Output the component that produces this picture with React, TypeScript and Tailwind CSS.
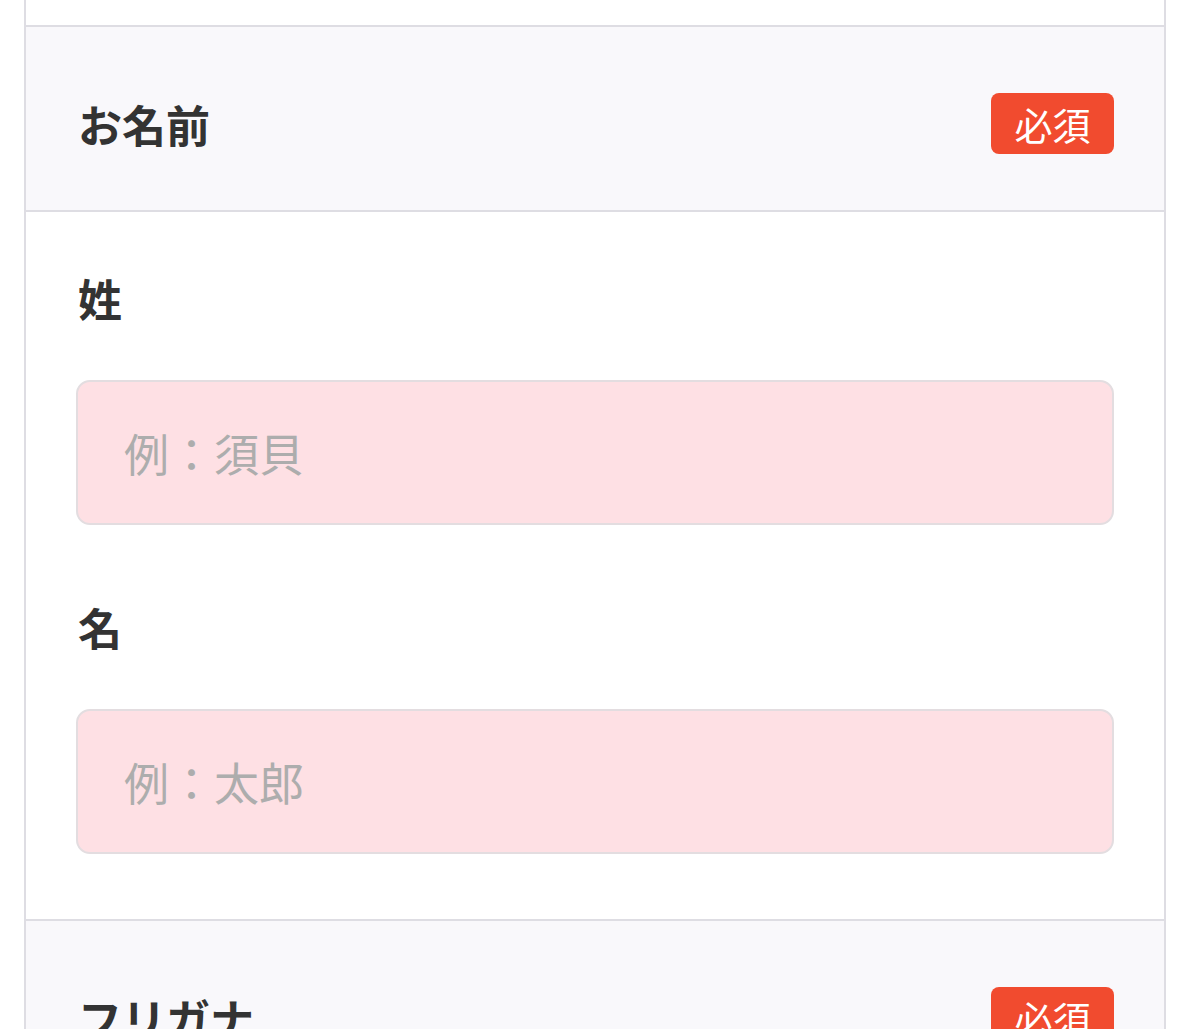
const font = { fontFamily: '"Noto Sans CJK JP", "Noto Sans", sans-serif' };

function SectionHeader({ title }: { title: string }) {
  return (
    <div className="flex h-[187px] items-center justify-between border-y-2 border-[#dedde3] bg-[#f9f8fb] pl-[52px] pr-[50px] pt-[10px]">
      <h2 className="text-[44px] font-bold leading-none text-[#333333]">{title}</h2>
      <span className="flex h-[61px] w-[123px] items-center justify-center rounded-[8px] bg-[#f14b2f] text-[38px] leading-none text-white">
        必須
      </span>
    </div>
  );
}

function Field({ label, placeholder }: { label: string; placeholder: string }) {
  return (
    <div className="flex flex-col">
      <label className="pl-[2px] text-[44px] font-bold leading-none text-[#333333]">{label}</label>
      <input
        className="mt-[60px] h-[145px] w-full rounded-[14px] border-2 border-[#e3dde0] bg-[#fee0e4] px-[46px] text-[45px] text-[#333333] outline-none placeholder:text-[#adadad]"
        placeholder={placeholder}
        style={font}
      />
    </div>
  );
}

export default function App() {
  return (
    <div className="min-h-screen bg-white" style={font}>
      <div className="ml-[24px] w-[1142px] border-x-2 border-[#dedde3]">
        <div className="h-[25px] bg-white" />
        <SectionHeader title="お名前" />
        <div className="flex flex-col gap-[80px] bg-white px-[50px] pb-[67px] pt-[64px]">
          <Field label="姓" placeholder="例：須貝" />
          <Field label="名" placeholder="例：太郎" />
        </div>
        <div className="-mt-[2px]">
          <SectionHeader title="フリガナ" />
        </div>
      </div>
    </div>
  );
}
